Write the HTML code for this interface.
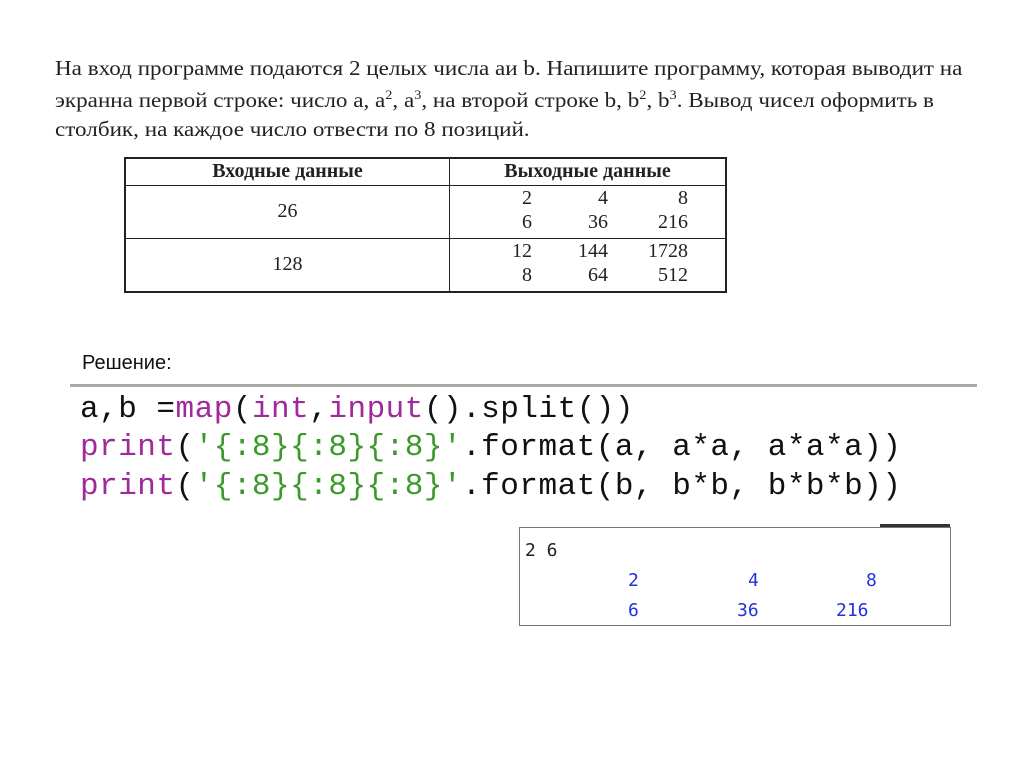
<!DOCTYPE html>
<html><head><meta charset="utf-8"><style>
body{margin:0;width:1024px;height:767px;background:#fff;position:relative;overflow:hidden;font-family:"Liberation Serif","Noto Serif CJK SC",serif;color:#222}
.a{position:absolute;white-space:nowrap}
.p{font-size:21px;transform-origin:0 0;transform:scaleX(1.1)}
.c{font-family:"Liberation Mono",monospace;font-size:31px;color:#111;letter-spacing:0.5px}
.k{color:#a02a9a}.s{color:#3a9a2a}
td{border:1px solid #222;padding:0;text-align:center;font-size:20px}
.r{position:absolute;text-align:right;width:60px}
.o{font-family:"DejaVu Sans Mono",monospace;font-size:18px}
</style></head><body>
<div class="a p" style="left:55px;top:56px">На вход программе подаются 2 целых числа аи b. Напишите программу, которая выводит на</div>
<div class="a p" style="left:55px;top:87px">экранна первой строке: число a, a<sup style="font-size:13px">2</sup>, a<sup style="font-size:13px">3</sup>, на второй строке b, b<sup style="font-size:13px">2</sup>, b<sup style="font-size:13px">3</sup>. Вывод чисел оформить в</div>
<div class="a p" style="left:55px;top:117px">столбик, на каждое число отвести по 8 позиций.</div>
<table class="a" style="left:124px;top:157px;width:603px;height:132px;border-collapse:collapse;border:2px solid #222">
<tr style="height:27px"><td style="width:323px;font-weight:bold">Входные данные</td><td style="font-weight:bold">Выходные данные</td></tr>
<tr style="height:52px"><td>26</td><td><div style="position:relative;height:52px"><span class="r" style="left:22px;top:1px">2</span><span class="r" style="left:98px;top:1px">4</span><span class="r" style="left:178px;top:1px">8</span><span class="r" style="left:22px;top:25px">6</span><span class="r" style="left:98px;top:25px">36</span><span class="r" style="left:178px;top:25px">216</span></div></td></tr>
<tr style="height:52px"><td>128</td><td><div style="position:relative;height:52px"><span class="r" style="left:22px;top:1px">12</span><span class="r" style="left:98px;top:1px">144</span><span class="r" style="left:178px;top:1px">1728</span><span class="r" style="left:22px;top:25px">8</span><span class="r" style="left:98px;top:25px">64</span><span class="r" style="left:178px;top:25px">512</span></div></td></tr>
</table>
<div class="a" style="left:82px;top:352px;font-family:'Liberation Sans',sans-serif;font-size:20px;color:#111">Решение:</div>
<div class="a" style="left:70px;top:384px;width:907px;height:3px;background:#aaa"></div>
<div class="a c" style="left:80px;top:392px">a,b =<span class="k">map</span>(<span class="k">int</span>,<span class="k">input</span>().split())</div>
<div class="a c" style="left:80px;top:430px"><span class="k">print</span>(<span class="s">'{:8}{:8}{:8}'</span>.format(a, a*a, a*a*a))</div>
<div class="a c" style="left:80px;top:469px"><span class="k">print</span>(<span class="s">'{:8}{:8}{:8}'</span>.format(b, b*b, b*b*b))</div>
<div class="a" style="left:519px;top:527px;width:430px;height:97px;border:1px solid #6a7a8a"></div>
<div class="a" style="left:880px;top:524px;width:70px;height:3px;background:#333"></div>
<div class="a o" style="left:525px;top:540px;color:#222">2 6</div>
<div class="a o" style="left:628px;top:570px;color:#2233dd">2</div>
<div class="a o" style="left:748px;top:570px;color:#2233dd">4</div>
<div class="a o" style="left:866px;top:570px;color:#2233dd">8</div>
<div class="a o" style="left:628px;top:600px;color:#2233dd">6</div>
<div class="a o" style="left:737px;top:600px;color:#2233dd">36</div>
<div class="a o" style="left:836px;top:600px;color:#2233dd">216</div>
</body></html>
